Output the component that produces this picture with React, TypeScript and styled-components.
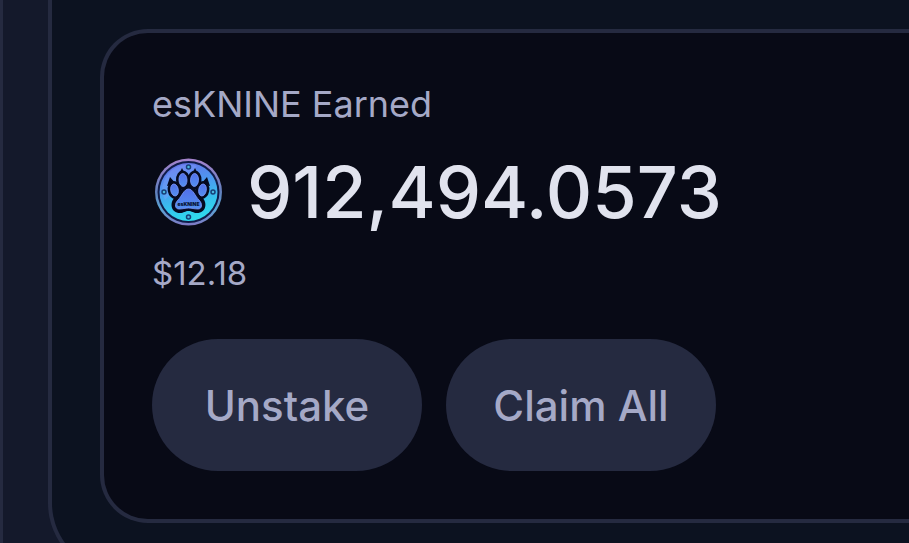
import React from "react";
import styled, { createGlobalStyle } from "styled-components";

const App = () => {
  return (
    <Page>
      <GlobalStyle />
      <Panel>
        <Card>
          <Label>esKNINE Earned</Label>
          <AmountRow>
            <TokenIcon />
            <Amount>912,494.0573</Amount>
          </AmountRow>
          <UsdValue>$12.18</UsdValue>
          <ButtonRow>
            <ActionButton type="button">Unstake</ActionButton>
            <ActionButton type="button">Claim All</ActionButton>
          </ButtonRow>
        </Card>
      </Panel>
    </Page>
  );
};

export default App;

const TokenIcon = () => (
  <Coin viewBox="0 0 72 72" aria-hidden="true">
    <defs>
      <linearGradient id="rim" x1="0" y1="0" x2="0" y2="1">
        <stop offset="0" stopColor="#a583cc" />
        <stop offset="0.5" stopColor="#6280bd" />
        <stop offset="0.75" stopColor="#5aa5d4" />
        <stop offset="1" stopColor="#8079c4" />
      </linearGradient>
      <linearGradient id="face" x1="0.35" y1="0" x2="0.6" y2="1">
        <stop offset="0" stopColor="#6573e8" />
        <stop offset="0.4" stopColor="#4a9cf0" />
        <stop offset="0.72" stopColor="#35c5ee" />
        <stop offset="1" stopColor="#2fdcec" />
      </linearGradient>
      <linearGradient id="pad" x1="0" y1="0" x2="0" y2="1">
        <stop offset="0" stopColor="#5270ea" />
        <stop offset="1" stopColor="#5390f0" />
      </linearGradient>
    </defs>
    <circle cx="36.5" cy="36" r="33.5" fill="url(#rim)" />
    <circle cx="36.5" cy="36" r="31" fill="#101c4a" />
    <circle cx="36.5" cy="36" r="29" fill="url(#face)" />
    <path d="M12 25C18 10 33 6 45 10L13 44Q8 34 12 25Z" fill="#86a5ff" opacity="0.35" />
    <g fill="#4bb7df" stroke="#173f77" strokeWidth="1.5">
      <circle cx="36.5" cy="11" r="2" />
      <circle cx="12" cy="36" r="2" />
      <circle cx="61" cy="36" r="2" />
      <circle cx="36.5" cy="61" r="2" />
    </g>
    <g fill="#050a20">
      <path d="M30 12L26 20L34 20ZM43 12L39 20L47 20ZM18 21L15 30L24 28ZM55 21L49 28L58 30Z" />
      <ellipse cx="31" cy="24" rx="7" ry="9.5" transform="rotate(-3 31 24)" />
      <ellipse cx="42.5" cy="24" rx="7" ry="9.5" transform="rotate(3 42.5 24)" />
      <ellipse cx="22.5" cy="34" rx="6.8" ry="9" transform="rotate(-10 22.5 34)" />
      <ellipse cx="50.5" cy="34" rx="6.8" ry="9" transform="rotate(10 50.5 34)" />
      <path d="M36.5 29C43 29 45 37 50 41C56 47 54 57 45 57C41 57 40 55 36.5 55C33 55 32 57 28 57C19 57 17 47 23 41C28 37 30 29 36.5 29Z" />
    </g>
    <g fill="url(#pad)" stroke="#7c98fb" strokeWidth="0.8">
      <ellipse cx="31" cy="24" rx="4" ry="6.5" transform="rotate(-3 31 24)" />
      <ellipse cx="42.5" cy="24" rx="4" ry="6.5" transform="rotate(3 42.5 24)" />
      <ellipse cx="22.5" cy="34" rx="3.8" ry="6" transform="rotate(-10 22.5 34)" />
      <ellipse cx="50.5" cy="34" rx="3.8" ry="6" transform="rotate(10 50.5 34)" />
      <path d="M36.5 33C41 33 43 40 47 44C51 48 50 53 46 53C42 53 40 52 36.5 52C33 52 31 53 27 53C23 53 22 48 26 44C30 40 32 33 36.5 33Z" />
    </g>
    <CoinText x="36.5" y="50" textAnchor="middle">esKNINE</CoinText>
  </Coin>
);

const GlobalStyle = createGlobalStyle`
  * {
    box-sizing: border-box;
  }

  body {
    margin: 0;
    background-color: #14192b;
    font-family: Inter, "Liberation Sans", sans-serif;
  }
`;

const Page = styled.main`
  height: 100vh;
  padding-left: 45px;
  overflow: hidden;
  border-left: 3px solid #252a40;
  background-color: #14192b;
`;

const Panel = styled.section`
  padding: 29px 0 48px 48px;
  border: 4px solid #252a40;
  border-width: 0 0 4px 4px;
  border-bottom-left-radius: 72px;
  background-color: #0c1220;
`;

const Card = styled.div`
  padding: 48px;
  border: 4px solid #252a40;
  border-right: 0;
  border-radius: 48px 0 0 48px;
  background-color: #080a16;
`;

const Label = styled.div`
  color: #a5a9c7;
  font-size: 36px;
  line-height: 46px;
`;

const AmountRow = styled.div`
  display: flex;
  align-items: center;
  gap: 23px;
  margin-top: 17px;
`;

const Coin = styled.svg`
  flex: none;
  width: 72px;
  height: 72px;
`;

const CoinText = styled.text`
  fill: #071437;
  font-size: 5px;
  font-weight: 900;
`;

const Amount = styled.div`
  color: #e1e3ee;
  font-size: 72px;
  font-weight: 500;
  line-height: 96px;
`;

const UsdValue = styled.div`
  margin-top: 9px;
  color: #a5a9c7;
  font-size: 33px;
  line-height: 48px;
`;

const ButtonRow = styled.div`
  display: flex;
  gap: 24px;
  margin-top: 42px;
`;

const ActionButton = styled.button`
  width: 270px;
  height: 132px;
  padding: 0;
  border: 0;
  border-radius: 66px;
  background-color: #252a40;
  color: #a5a9c7;
  font-family: inherit;
  font-size: 42px;
  font-weight: 500;
  cursor: pointer;
`;
